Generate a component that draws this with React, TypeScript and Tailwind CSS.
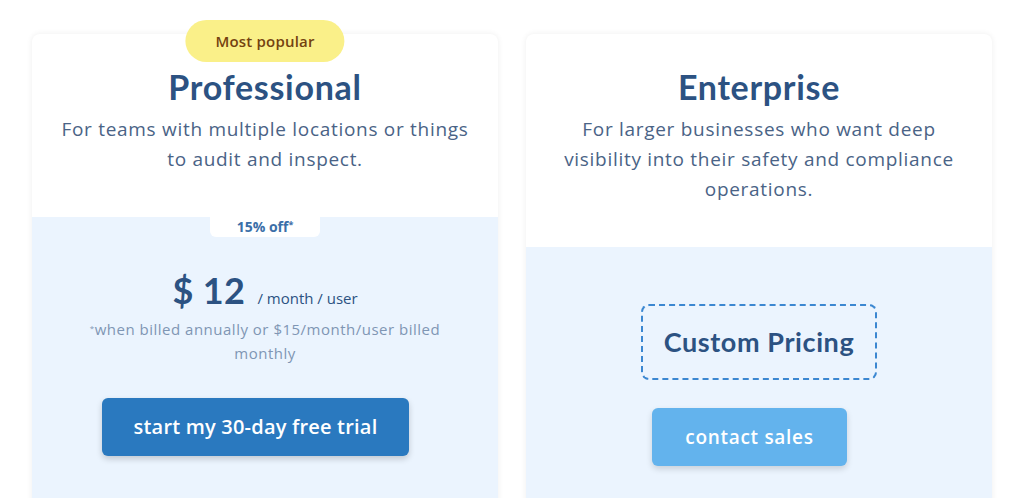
import React from 'react';

const heading = "font-['Lato',sans-serif] font-bold text-[#2c5282]";
const body = "font-['Open_Sans',sans-serif]";

function PlanHeader({ title, children }: { title: string; children: React.ReactNode }) {
  return (
    <div className="px-[14px] pt-[33px] pb-[43px] text-center">
      <h2 className={`${heading} text-[34px] leading-[40px] tracking-[0.7px]`}>{title}</h2>
      <p className={`${body} mt-[7px] text-[19px] leading-[30px] tracking-[0.7px] text-[#4a6386]`}>{children}</p>
    </div>
  );
}

export default function App() {
  return (
    <div className="min-h-[498px] h-[498px] overflow-hidden bg-white px-[32px] pt-[34px]">
      <div className="grid grid-cols-2 gap-[28px]">
        {/* Professional */}
        <div className="relative flex min-h-[520px] flex-col rounded-[8px] bg-white shadow-[0_0_6px_rgba(0,0,0,0.07)]">
          <div className="absolute left-1/2 top-[-14px] -translate-x-1/2 rounded-full bg-[#faf089] px-[30px] py-[10px] font-['Open_Sans',sans-serif] text-[15px] font-semibold leading-[22px] tracking-[0.2px] text-[#744210]">
            Most popular
          </div>
          <PlanHeader title="Professional">
            For teams with multiple locations or things
            <br />
            to audit and inspect.
          </PlanHeader>
          <div className="flex flex-1 flex-col items-center rounded-b-[8px] bg-[#ebf4fe]">
            <div className="rounded-b-[6px] bg-white px-[27px] pb-[1px] font-['Open_Sans',sans-serif] text-[14px] font-bold leading-[19px] text-[#3b6fa8]">
              15% off<sup className="text-[9px]">*</sup>
            </div>
            <div className="mt-[31px] flex items-baseline gap-[12px]">
              <span className={`${heading} text-[36px] leading-[44px] tracking-[0.4px]`}>$ 12</span>
              <span className={`${body} text-[15px] text-[#2c5282]`}>/ month / user</span>
            </div>
            <p className={`${body} mt-[5px] w-[400px] text-center text-[15px] leading-[24px] tracking-[0.5px] text-[#7f96b4]`}>
              <sup className="text-[8px]">*</sup>when billed annually or $15/month/user billed monthly
            </p>
            <button className="mr-[19px] mt-[33px] h-[58px] w-[307px] rounded-[6px] bg-[#2a79bf] font-['Open_Sans',sans-serif] text-[20px] font-semibold tracking-[0.2px] text-white shadow-[0_3px_6px_rgba(0,0,0,0.18)]">
              start my 30-day free trial
            </button>
          </div>
        </div>

        {/* Enterprise */}
        <div className="flex min-h-[520px] flex-col rounded-[8px] bg-white shadow-[0_0_6px_rgba(0,0,0,0.07)]">
          <PlanHeader title="Enterprise">
            For larger businesses who want deep
            <br />
            visibility into their safety and compliance
            <br />
            operations.
          </PlanHeader>
          <div className="flex flex-1 flex-col items-center rounded-b-[8px] bg-[#ebf4fe] pt-[57px]">
            <div className="flex h-[76px] w-[236px] items-center justify-center rounded-[8px] border-2 border-dashed border-[#3b87d1]">
              <span className={`${heading} text-[27px] tracking-[0.6px]`}>Custom Pricing</span>
            </div>
            <button className="mr-[19px] mt-[28px] h-[58px] w-[195px] rounded-[6px] bg-[#63b3ed] font-['Open_Sans',sans-serif] text-[19px] font-semibold tracking-[0.7px] text-white shadow-[0_3px_6px_rgba(0,0,0,0.15)]">
              contact sales
            </button>
          </div>
        </div>
      </div>
    </div>
  );
}
